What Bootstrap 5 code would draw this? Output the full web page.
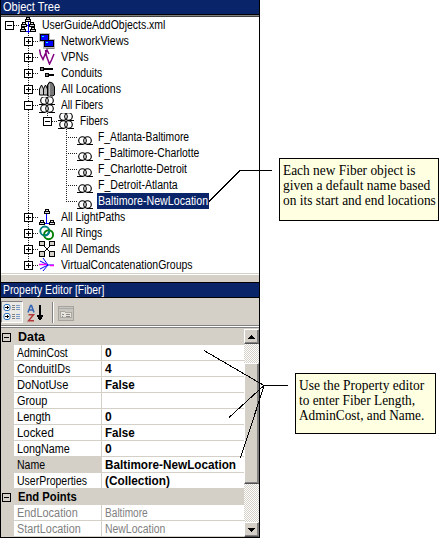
<!DOCTYPE html>
<html lang="en">
<head>
<meta charset="utf-8">
<title>Object Tree</title>
<link href="https://cdn.jsdelivr.net/npm/bootstrap@5.3.0/dist/css/bootstrap.min.css" rel="stylesheet">
<style>
body{width:439px;height:538px;overflow:hidden;background:#fff;color:#000;font:12px/16px "Liberation Sans",Arial,sans-serif}
svg{display:block;flex:none;shape-rendering:crispEdges}
.app-panel{width:260px;height:538px;border:solid #000;border-width:0 1px 1px;background:#d4d0c8}
.bar{height:14px;line-height:14px;background:#0a246a;color:#fff;padding-left:2px}
.tree{height:256px;background:#fff}
.t-row{height:16px}
.fit{display:inline-block;white-space:nowrap;transform-origin:0 50%;flex:none}
.lv0{padding-left:4px}.lv1{padding-left:23px}.lv2{padding-left:42px}.lv3{padding-left:76px}
.tog{margin-right:6px}
.lbl{margin-left:4px;height:16px;line-height:17px;padding-left:1px}
.lv1 .lbl,.lv2 .lbl{margin-left:4px}
.lv3 .lbl{margin-left:3px}
.sel{background:#0a246a;color:#fff;width:112px}
.splitter{height:9px;border-top:1px solid #d4d0c8;background:#d4d0c8;box-shadow:inset 0 1px #fff}
.tools{height:27px}
.cat-btn{width:22px;height:22px;margin-top:3px;background:#ebe9e5;border:1px solid #808080;border-right-color:#fff;border-bottom-color:#fff}
.sep{width:2px;height:21px;background:#808080;border-right:1px solid #fff}
.rule{height:3px;background:#fff;border:solid #808080;border-width:1px 0}
.pgrid{height:209px;padding-top:1px}
.cat{height:16px;padding-left:1px;font-weight:700}
.cat .fit{margin-left:7px}
.p-row{height:16px;margin-left:13px;background:#fff;border-bottom:1px solid #d4d0c8;line-height:17px}
.p-name{width:88px;border-right:1px solid #d4d0c8;padding-left:3px;height:15px}
.p-val{padding-left:3px;font-weight:700;height:15px}
.off,.off .p-val{color:#808080;font-weight:400}
.hot .p-name{background:#d4d0c8}
.sbar{width:15px;background:repeating-conic-gradient(#d4d0c8 0 25%,#fff 0 50%) 0 0/2px 2px}
.face{background:#d4d0c8;border:1px solid;border-color:#fff #808080 #505050 #fff;box-shadow:inset -1px -1px #808080}
.note{background:#ffffe1;border:1px solid #000;font:14px/15px "Liberation Serif","Times New Roman",serif;padding:4px 0 0 3px}
.n1{left:279px;top:158px;width:160px;height:63px}
.n2{left:295px;top:373px;width:141px;height:61px}
.over{left:0;top:0;pointer-events:none}
</style>
<script src="https://cdn.jsdelivr.net/npm/bootstrap@5.3.0/dist/js/bootstrap.bundle.min.js"></script>
</head>
<body class="position-relative">
<svg width="0" height="0" class="position-absolute">
<defs>
<g id="plus"><path d="M.5.5h8v8h-8z" fill="#fff" stroke="#000"/><path d="M2 4.500h5M4.500 2v5" stroke="#000"/></g>
<g id="minus"><path d="M.5.5h8v8h-8z" fill="#fff" stroke="#000"/><path d="M2 4.500h5" stroke="#000"/></g>
<g id="node"><path d="M1.500.5h3v2h-3zM.5 2.500h5v2h-5z" fill="#ddd" stroke="#000"/></g>
<g id="root"><path d="M8.500 5v11M5 8.500h7M3.500 14.500h10M5 9V6M12 9V6" stroke="#00f" fill="none"/><use href="#node" x="5"/><use href="#node" x="1" y="5"/><use href="#node" x="9" y="5"/><use href="#node" x="0" y="10"/><use href="#node" x="10" y="10"/></g>
<g id="net"><path d="M0 0h11v9H0zM4 6h12v10H4z" fill="#b8b8b8"/><path d="M1.500 1.500h8v6h-8zM5.500 7.500h9v6h-9z" fill="#00f" stroke="#000"/><path d="M3 3h2v1H3zM7 9h2v1H7z" fill="#0ff"/><path d="M7 15h8" stroke="#777"/></g>
<g id="vpn" fill="none" stroke="#800080" shape-rendering="auto"><path d="M.5.500l1 5 2.500 5 2-5 2-4.500 2 4M6.500 1l1 6 3 8 2-4 2.500-6M4 10l3-6" stroke-width="1.500"/></g>
<g id="con" fill="#808080" stroke="#000"><path d="M1.500 2.500h3v3h-3zM4.500 3.500h9v1h-9zM6.500 8.500h3v3h-3zM9.500 9.500h5v1h-5z"/></g>
<g id="loc" stroke="#000" shape-rendering="auto"><path d="M.5 14V8l2-4 2 4v6z" fill="#ccc"/><path d="M4.500 14V8l2-4 2 4v6z" fill="#bbb"/><path d="M8.500 15V4l2-3 3 1 2 4v8l-2 1z" fill="#777"/><path d="M10.500 3v12" stroke="#bbb"/></g>
<g id="coil" fill="none" stroke="#000" stroke-width="1.150" shape-rendering="auto"><ellipse cx="5.500" cy="4.500" rx="3.800" ry="3.800"/><ellipse cx="10.500" cy="4.500" rx="3.800" ry="3.800"/><path d="M0 8.500h6M10 8.500h6" stroke-width="1" shape-rendering="crispEdges"/></g>
<g id="fibs"><use href="#coil" y="-1"/><use href="#coil" y="7"/></g>
<g id="fib"><use href="#coil" y="7"/></g>
<g id="light"><path d="M7.500 5v9M4 14.500h7" stroke="#00f"/><path d="M6.500.5h3v2h-3zM5.500 2.500h5v2h-5zM1.500 11.500h3v2h-3zM.5 13.500h5v2h-5zM11.500 11.500h3v2h-3zM10.500 13.500h5v2h-5z" fill="#ddd" stroke="#000"/></g>
<g id="ring" fill="none" stroke-width="1.900" shape-rendering="auto"><circle cx="5.800" cy="6" r="4.500" stroke="#008080"/><circle cx="9.600" cy="9.700" r="4.500" stroke="#008000"/><path d="M5 10.500a4.500 4.500 0 0 0 5-5" stroke="#008080"/></g>
<g id="dem"><path d="M5 5l6 6M11 5l-6 6" stroke="#000" shape-rendering="auto"/><path d="M.5.5h5v4h-5zM10.500.5h5v4h-5zM.5 10.500h5v5h-5zM10.500 10.500h5v5h-5z" fill="#d4d0c8" stroke="#000"/></g>
<g id="vcg" fill="none" shape-rendering="auto"><path d="M4 1l5 7-5 6M1 4l8 4-8 4M9 8h6" stroke="#00f"/><path d="M0 7.500h8M11 8.500h4" stroke="#f0f" stroke-width="1.300"/></g>
</defs></svg>

<main class="app-panel d-flex flex-column">
<header class="bar flex-shrink-0"><span class="fit" data-w="57">Object Tree</span></header>
<svg width="258" height="3"><path d="M0 .5h258" stroke="#000"/><path d="M0 1.500h258" stroke="#808080"/><path d="M0 2.500h258" stroke="#404040"/></svg>
<section class="tree flex-shrink-0" id="tree"></section>
<div class="splitter flex-shrink-0"></div>
<svg width="258" height="1"><path d="M0 .5h258" stroke="#000"/></svg>
<header class="bar flex-shrink-0"><span class="fit" data-w="101">Property Editor [Fiber]</span></header>
<svg width="258" height="1"><path d="M0 .5h258" stroke="#000"/></svg>
<div class="tools d-flex flex-shrink-0">
<div class="cat-btn"><svg width="20" height="20"><g fill="#fff" stroke="#2a6fc0" shape-rendering="auto"><rect x="2" y="2.500" width="6" height="6" rx="2"/><rect x="2" y="11.500" width="6" height="6" rx="2"/></g><path d="M3 5.500h4M5.500 4v3M3 14.500h4M5.500 13v3" stroke="#000"/><path d="M10 3.500h3M10 5.500h3M10 7.500h3M10 12.500h3M10 14.500h3M10 16.500h3" stroke="#808080"/><path d="M14 3.500h4M14 5.500h4M14 7.500h4M14 12.500h4M14 14.500h4M14 16.500h4" stroke="#7898c8"/></svg></div>
<svg class="ms-1" width="17" height="24"><g fill="none" stroke-width="1.500" shape-rendering="auto"><path d="M1 14.500l2.500-7h1l2.500 7M2 12h4" stroke="#3464b4"/><path d="M1.500 16.800h5l-5 6h5.500" stroke="#b03838"/></g><path d="M12 7h2v12h-2zM10 17h6v1h-6zM10 18h6v1h-6zM11 19h4v2h-4zM12 21h2v1h-2z"/></svg>
<div class="sep ms-2 mt-1"></div>
<svg class="ms-1 mt-2" width="16" height="15"><path d="M.5.5h15v14H.5z" fill="#c8c5be" stroke="#a6a39c"/><path d="M1 2.500h14" stroke="#aaa"/><path d="M2.500 5.500h4l1 1h6v5h-11z" fill="#e8e5df" stroke="#aaa79f"/><path d="M4 8.500h2M8 8.500h4M4 10.500h1M8 10.500h4" stroke="#888"/></svg>
</div>
<div class="rule flex-shrink-0"></div>
<section class="pgrid d-flex">
<div class="flex-grow-1" id="props"></div>
<div class="sbar d-flex flex-column">
<div class="face" style="height:15px"><svg width="13" height="13"><path d="M6 5h1v1H6zM5 6h3v1H5zM4 7h5v1H4zM3 8h7v1H3z"/></svg></div>
<div class="face" style="height:121px;margin-top:19px"></div>
<div class="face mt-auto" style="height:15px"><svg width="13" height="13"><path d="M3 5h7v1H3zM4 6h5v1H4zM5 7h3v1H5zM6 8h1v1H6z"/></svg></div>
</div>
</section>
</main>

<aside class="note n1 position-absolute"><div><span class="fit" data-w="132">Each new Fiber object is</span></div><div><span class="fit" data-w="147">given a default name based</span></div><div><span class="fit" data-w="153">on its start and end locations</span></div></aside>
<aside class="note n2 position-absolute"><div><span class="fit" data-w="125">Use the Property editor</span></div><div><span class="fit" data-w="116">to enter Fiber Length,</span></div><div><span class="fit" data-w="125">AdminCost, and Name.</span></div></aside>
<svg class="over position-absolute" width="439" height="538" fill="none" stroke="#000">
<path d="M14 25.500h6M33 41.500h6M33 57.500h6M33 73.500h6M33 89.500h6M33 105.500h6M52 121.500h6M66 137.500h11M66 153.500h11M66 169.500h11M66 185.500h11M66 201.500h11M33 217.500h6M33 233.500h6M33 249.500h6M33 265.500h6M28.500 33v4M28.500 46v7M28.500 62v7M28.500 78v7M28.500 94v7M28.500 110v103M28.500 222v7M28.500 238v7M28.500 254v7M47.500 113v4M66.500 129v73" stroke="#222" stroke-dasharray="1 1"/>
<path d="M209 201.500L240 170.500H272M204 350.500L264 385.500H288M229 417.500L264 385.500M240.500 458L264 386"/>
</svg>
<script>
const tree=[[0,'minus','root','UserGuideAddObjects.xml',123],[1,'plus','net','NetworkViews',68],[1,'plus','vpn','VPNs',28],[1,'plus','con','Conduits',41],[1,'plus','loc','All Locations',60],[1,'minus','fibs','All Fibers',42],[2,'minus','fibs','Fibers',28],[3,'','fib','F_Atlanta-Baltimore',91],[3,'','fib','F_Baltimore-Charlotte',101],[3,'','fib','F_Charlotte-Detroit',89],[3,'','fib','F_Detroit-Atlanta',80],[3,'','fib','Baltimore-NewLocation',110],[1,'plus','light','All LightPaths',64],[1,'plus','ring','All Rings',41],[1,'plus','dem','All Demands',59],[1,'plus','vcg','VirtualConcatenationGroups',132]];
document.getElementById('tree').innerHTML=tree.map(([l,t,i,s,w])=>`<div class="t-row d-flex align-items-center lv${l}">${t?`<svg class="tog" width="9" height="9"><use href="#${t}"/></svg>`:''}<svg width="17" height="16"><use href="#${i}"/></svg><div class="lbl ${s==='Baltimore-NewLocation'?'sel':''}"><span class="fit" data-w="${w}">${s}</span></div></div>`).join('');
const props=[['Data',27],['AdminCost',51,'0',7],['ConduitIDs',53,'4',7],['DoNotUse',51,'False',30],['Group',30,'',0],['Length',34,'0',7],['Locked',37,'False',30],['LongName',53,'0',7],['Name',28,'Baltimore-NewLocation',131],['UserProperties',70,'(Collection)',65],['End Points',59],['EndLocation',61,'Baltimore',43],['StartLocation',64,'NewLocation',60]];
document.getElementById('props').innerHTML=props.map(([n,w,v,x],k)=>v===undefined?`<div class="cat d-flex align-items-center"><svg width="9" height="9"><path d="M.5.5h8v8h-8z" fill="none" stroke="#000"/><path d="M2 4.500h5" stroke="#000"/></svg><span class="fit" data-w="${w}">${n}</span></div>`:`<div class="p-row d-flex ${k>10?'off':''} ${n==='Name'?'hot':''}"><div class="p-name"><span class="fit" data-w="${w}">${n}</span></div><div class="p-val"><span class="fit" data-w="${x}">${v}</span></div></div>`).join('');
// Condense each label horizontally to its design width.
document.querySelectorAll('.fit').forEach(e=>{const n=e.offsetWidth;if(n){const w=+e.dataset.w;e.style.transform=`scaleX(${w/n})`;e.style.marginRight=(w-n)+'px'}});
</script>
</body>
</html>
